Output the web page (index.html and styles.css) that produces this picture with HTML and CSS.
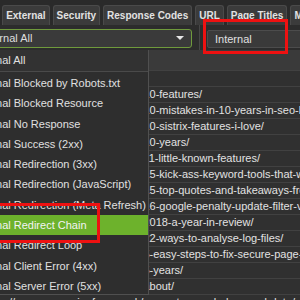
FILE: index.html
```html
<!DOCTYPE html>
<html>
<head>
<meta charset="utf-8">
<link rel="stylesheet" href="styles.css">
</head>
<body>
<div class="tabs">
  <div class="tab tab-first">Internal</div>
  <div class="tab">External</div>
  <div class="tab">Security</div>
  <div class="tab">Response Codes</div>
  <div class="tab">URL</div>
  <div class="tab">Page Titles</div>
  <div class="tab">Meta Description</div>
</div>
<div class="toolbar">
  <div class="select">
    <span class="select-text">Internal All</span>
    <span class="caret"></span>
  </div>
  <div class="sep"></div>
  <div class="field">Internal</div>
</div>
<div class="content">
  <div class="table">
    <div class="thead"></div>
    <div class="row">https://www.screamingfrog.co.uk/</div>
    <div class="row">https://www.screamingfrog.co.uk/10-features/</div>
    <div class="row">https://www.screamingfrog.co.uk/10-mistakes-in-10-years-in-seo-brighton/</div>
    <div class="row">https://www.screamingfrog.co.uk/10-sistrix-features-i-love/</div>
    <div class="row">https://www.screamingfrog.co.uk/10-years/</div>
    <div class="row">https://www.screamingfrog.co.uk/11-little-known-features/</div>
    <div class="row">https://www.screamingfrog.co.uk/15-kick-ass-keyword-tools-that-will-help-you/</div>
    <div class="row">https://www.screamingfrog.co.uk/15-top-quotes-and-takeaways-from-brightonseo/</div>
    <div class="row">https://www.screamingfrog.co.uk/16-google-penalty-update-filter-victims/</div>
    <div class="row">https://www.screamingfrog.co.uk/2018-a-year-in-review/</div>
    <div class="row">https://www.screamingfrog.co.uk/22-ways-to-analyse-log-files/</div>
    <div class="row">https://www.screamingfrog.co.uk/5-easy-steps-to-fix-secure-page-https-warnings/</div>
    <div class="row">https://www.screamingfrog.co.uk/5-years/</div>
    <div class="row">https://www.screamingfrog.co.uk/about/</div>
    <div class="row">https://www.screamingfrog.co.uk/accurate-google-keyword-data/</div>
  </div>
  <div class="popup">
    <div class="item item-first">Internal All</div>
    <div class="divider"></div>
    <div class="item">Internal Blocked by Robots.txt</div>
    <div class="item">Internal Blocked Resource</div>
    <div class="item">Internal No Response</div>
    <div class="item">Internal Success (2xx)</div>
    <div class="item">Internal Redirection (3xx)</div>
    <div class="item">Internal Redirection (JavaScript)</div>
    <div class="item">Internal Redirection (Meta Refresh)</div>
    <div class="item item-active">Internal Redirect Chain</div>
    <div class="item">Internal Redirect Loop</div>
    <div class="item">Internal Client Error (4xx)</div>
    <div class="item">Internal Server Error (5xx)</div>
  </div>
  <div class="mark mark-chain"></div>
</div>
<div class="mark mark-field"></div>
</body>
</html>
```
FILE: styles.css
```css
html, body {
  margin: 0;
  padding: 0;
}
body {
  width: 300px;
  height: 300px;
  overflow: hidden;
  background: #2f2f2f;
  font-family: "Liberation Sans", Arial, sans-serif;
  color: #dedede;
  position: relative;
}
.tabs {
  display: flex;
  align-items: flex-end;
  gap: 3px;
  height: 25px;
  margin-left: -45px;
  background: #2a2a2a;
  white-space: nowrap;
}
.tab {
  height: 19px;
  line-height: 19px;
  padding: 0 3px;
  border: 1px solid #4a4a4a;
  border-bottom: none;
  border-radius: 3px 3px 0 0;
  background: #3b3b3b;
  font-size: 10px;
  font-weight: bold;
  color: #e2e2e2;
  flex: none;
}
.toolbar {
  display: flex;
  align-items: center;
  height: 25px;
  background: #2c2c2c;
}
.select {
  flex: none;
  width: 200px;
  height: 17px;
  margin-left: -10px;
  margin-top: 1px;
  border: 1px solid #6f9a3c;
  border-radius: 3px;
  background: #3a3a3a;
  display: flex;
  align-items: center;
  justify-content: space-between;
  font-size: 11px;
  overflow: hidden;
}
.select-text {
  margin-left: -10px;
  white-space: nowrap;
}
.caret {
  width: 0;
  height: 0;
  border-left: 4px solid transparent;
  border-right: 4px solid transparent;
  border-top: 4px solid #e6e6e6;
  margin-right: 7px;
}
.sep {
  flex: none;
  width: 1px;
  height: 26px;
  margin-left: 7px;
  background: #474747;
}
.field {
  flex: none;
  width: 110px;
  height: 16px;
  line-height: 16px;
  margin-left: 7px;
  margin-top: 2px;
  padding-left: 7px;
  border: 1px solid #4c4c4c;
  border-radius: 2px;
  background: #3a3a3a;
  font-size: 11px;
  color: #e0e0e0;
}
.content {
  position: relative;
}
.table {
  margin-left: -18px;
}
.thead {
  height: 20px;
  background: #3a3a3a;
}
.row {
  height: 15px;
  line-height: 15px;
  border-top: 1px solid #414141;
  font-size: 11px;
  color: #e2e2e2;
  white-space: nowrap;
  background: #303030;
}
.popup {
  position: absolute;
  left: 0;
  top: 0;
  width: 148px;
  height: 244px;
  background: #2e2e2e;
  border-right: 1px solid #505050;
  border-bottom: 1px solid #505050;
  overflow: hidden;
}
.item {
  height: 20.3px;
  line-height: 20px;
  font-size: 11px;
  white-space: nowrap;
  text-indent: -26px;
  color: #e0e0e0;
}
.item-first {
  height: 21px;
  background: #323232;
}
.divider {
  height: 1px;
  background: #4a4a4a;
  margin-bottom: 1px;
}
.item-active {
  background: #6db22c;
  color: #f4f4f4;
}
.mark {
  position: absolute;
  border: 3px solid #ee1111;
  box-sizing: border-box;
}
.mark-chain {
  left: -5px;
  top: 153px;
  width: 105px;
  height: 40px;
}
.mark-field {
  left: 203px;
  top: 19px;
  width: 85px;
  height: 35px;
}
```
